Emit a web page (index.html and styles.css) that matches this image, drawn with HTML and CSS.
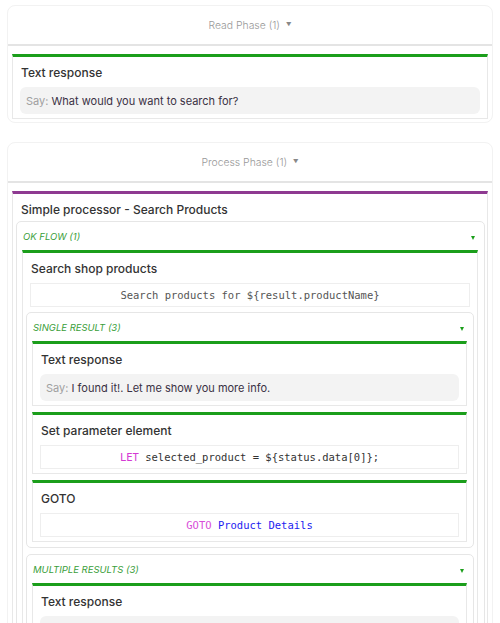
FILE: index.html
```html
<!DOCTYPE html>
<html>
<head>
<meta charset="utf-8">
<link rel="stylesheet" href="styles.css">
</head>
<body>
<section class="phase">
  <div class="phase-head">Read Phase (1) <span class="pcaret">▼</span></div>
  <div class="phase-body">
    <div class="card">
      <div class="card-title">Text response</div>
      <div class="say"><span class="say-label">Say:</span> What would you want to search for?</div>
    </div>
  </div>
</section>

<section class="phase phase-process">
  <div class="phase-head">Process Phase (1) <span class="pcaret">▼</span></div>
  <div class="phase-body">
    <div class="card card-purple">
      <div class="card-title">Simple processor - Search Products</div>
      <div class="panel">
        <div class="panel-head"><span>OK FLOW (1)</span><span class="tri"></span></div>
        <div class="card">
          <div class="card-title">Search shop products</div>
          <div class="code">Search products for ${result.productName}</div>
          <div class="panel">
            <div class="panel-head"><span>SINGLE RESULT (3)</span><span class="tri"></span></div>
            <div class="card">
              <div class="card-title">Text response</div>
              <div class="say"><span class="say-label">Say:</span> I found it!. Let me show you more info.</div>
            </div>
            <div class="card">
              <div class="card-title">Set parameter element</div>
              <div class="code code-dark"><span class="kw">LET</span> selected_product = ${status.data[0]};</div>
            </div>
            <div class="card">
              <div class="card-title">GOTO</div>
              <div class="code"><span class="kw2">GOTO</span> <span class="target">Product Details</span></div>
            </div>
          </div>
          <div class="panel">
            <div class="panel-head"><span>MULTIPLE RESULTS (3)</span><span class="tri"></span></div>
            <div class="card">
              <div class="card-title">Text response</div>
              <div class="say"><span class="say-label">Say:</span> I found several products. Choose one.</div>
            </div>
          </div>
        </div>
      </div>
    </div>
  </div>
</section>
</body>
</html>
```

FILE: styles.css
```css
html, body {
  margin: 0;
  padding: 0;
  background: #ffffff;
}
body {
  font-family: Inter, "Noto Sans", sans-serif;
  color: #333;
  padding-top: 5px;
}
.phase {
  margin: 0 7px;
  border: 1px solid #f2f2f2;
  border-radius: 8px;
}
.phase-process {
  margin-top: 19px;
}
.phase-head {
  height: 38px;
  display: flex;
  align-items: center;
  justify-content: center;
  font-size: 10.4px;
  font-weight: 300;
  color: #999999;
  border-bottom: 2px solid #e4e4e4;
}
.pcaret {
  font-size: 5.5px;
  color: #888;
  margin-left: 6px;
}
.phase-body {
  padding: 8px 4px 3px;
}
.card {
  border: 1px solid #e8e8e8;
  border-top: 3px solid #1b9e1b;
  padding: 0 3px 4px;
  background: #fff;
}
.card + .card {
  margin-top: 6px;
}
.card-purple {
  border-top-color: #8e3a91;
  padding: 0 2px 0 3px;
}
.card-title {
  font-size: 12px;
  font-weight: 500;
  line-height: 15px;
  padding: 8px 5px 7px;
  color: #333333;
}
.card-purple > .card-title {
  padding-bottom: 3px;
}
.say {
  background: #f3f3f3;
  border-radius: 6px;
  height: 27px;
  display: flex;
  align-items: center;
  margin: 0 4px;
  padding: 0 6px;
  font-size: 11px;
  color: #3a3144;
  white-space: pre;
}
.say-label {
  color: #a0a0a0;
}
.code {
  border: 1px solid #eeeeee;
  height: 22px;
  line-height: 22px;
  margin: 0 4px;
  text-align: center;
  font-family: "DejaVu Sans Mono", "Liberation Mono", monospace;
  font-size: 10.5px;
  color: #555;
  white-space: pre;
}
.code-dark {
  color: #333;
}
.kw {
  color: #d43ad4;
}
.kw2 {
  color: #d84ed8;
}
.target {
  color: #1c1cf0;
}
.panel {
  border: 1px solid #e6e6e6;
  border-radius: 5px;
  padding: 0 6px 5px 5px;
  margin-top: 1px;
}
.card > .code + .panel {
  margin-top: 5px;
}
.panel + .panel {
  margin-top: 6px;
}
.panel-head {
  height: 28px;
  display: flex;
  align-items: center;
  justify-content: space-between;
  padding: 0 3px 0 1px;
  font-size: 9.5px;
  font-style: italic;
  color: #3a9e3a;
}
.tri {
  width: 0;
  height: 0;
  border-left: 2.5px solid transparent;
  border-right: 2.5px solid transparent;
  border-top: 4px solid #1b9e1b;
  margin-top: 3px;
}
```
